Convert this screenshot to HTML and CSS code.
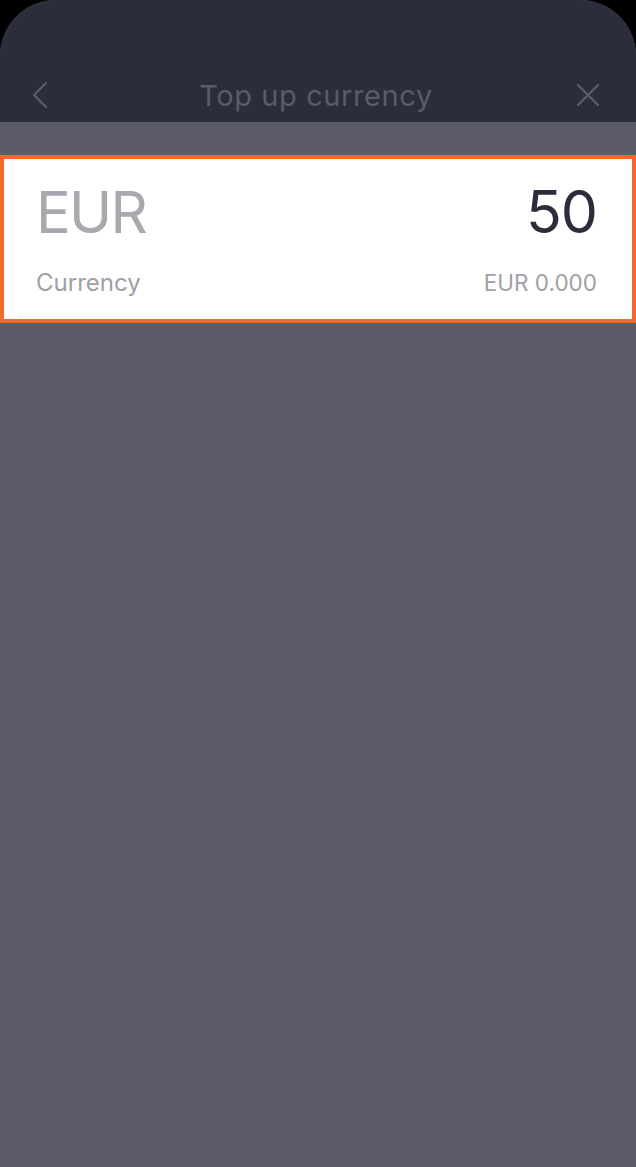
FILE: index.html
```html
<!DOCTYPE html>
<html>
<head>
<meta charset="utf-8">
<link rel="stylesheet" href="styles.css">
</head>
<body>
<div class="screen">
  <header class="topbar">
    <button class="icon-btn back" aria-label="Back">
      <svg width="16" height="28" viewBox="0 0 16 28"><path d="M14 2 L2 14 L14 26" fill="none" stroke="#5c5e6c" stroke-width="2.2" stroke-linecap="round" stroke-linejoin="round"/></svg>
    </button>
    <h1 class="title">Top up currency</h1>
    <button class="icon-btn close" aria-label="Close">
      <svg width="24" height="24" viewBox="0 0 24 24"><path d="M2 2 L22 22 M22 2 L2 22" fill="none" stroke="#5c5e6c" stroke-width="2.2" stroke-linecap="round"/></svg>
    </button>
  </header>
  <main class="content">
    <section class="card">
      <div class="row main-row">
        <span class="code">EUR</span>
        <span class="amount">50</span>
      </div>
      <div class="row sub-row">
        <span class="label">Currency</span>
        <span class="balance">EUR 0.000</span>
      </div>
    </section>
  </main>
</div>
</body>
</html>
```

FILE: styles.css
```css
html, body {
  margin: 0;
  padding: 0;
  background: #000;
}
body {
  font-family: "Inter", "Lato", sans-serif;
}
.screen {
  width: 636px;
  height: 1167px;
  background: #5c5c69;
  border-radius: 56px 56px 0 0;
  overflow: hidden;
  display: flex;
  flex-direction: column;
}
.topbar {
  height: 122px;
  background: #2b2d3b;
  display: flex;
  align-items: flex-end;
  justify-content: space-between;
  padding: 0 36px 0 32px;
  box-sizing: border-box;
}
.icon-btn {
  background: none;
  border: none;
  padding: 0;
  display: flex;
  align-items: center;
  justify-content: center;
  height: 30px;
  margin-bottom: 12px;
}
.title {
  margin: 0 0 8px 8px;
  font-size: 29px;
  font-weight: 400;
  color: #5a5c6a;
  line-height: 36px;
  letter-spacing: 0.6px;
}
.content {
  flex: 1;
  padding-top: 33px;
}
.card {
  background: #fff;
  border: 4px solid #f26a2e;
  height: 168px;
  box-sizing: border-box;
  padding: 0 35px 0 32px;
  display: flex;
  flex-direction: column;
}
.row {
  display: flex;
  justify-content: space-between;
  align-items: baseline;
}
.main-row {
  margin-top: 20px;
  height: 66px;
}
.code {
  font-size: 58px;
  color: #a8a8ae;
  line-height: 66px;
  letter-spacing: -1.8px;
}
.amount {
  font-size: 59px;
  color: #2b2d3b;
  line-height: 66px;
  letter-spacing: -1px;
}
.sub-row {
  margin-top: 23px;
}
.label {
  font-size: 24px;
  color: #a0a0a6;
}
.balance {
  font-size: 22.5px;
  color: #a0a0a6;
}
```
